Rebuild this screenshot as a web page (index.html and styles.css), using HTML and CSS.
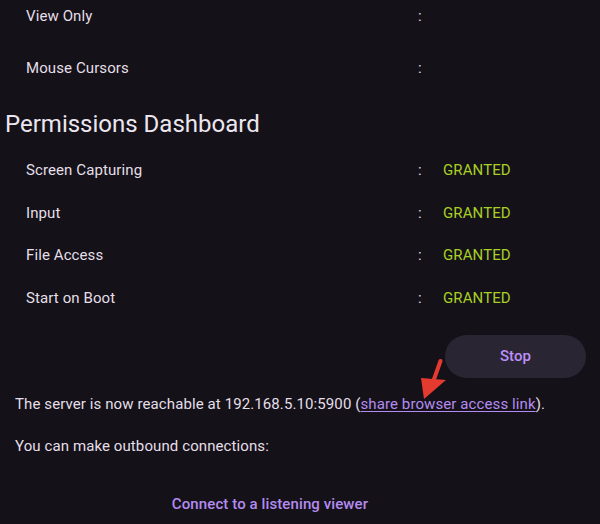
FILE: index.html
```html
<!DOCTYPE html>
<html>
<head>
<meta charset="utf-8">
<link rel="stylesheet" href="styles.css">
</head>
<body>
<div class="page">
  <div class="rows rows-top">
    <div class="row"><span class="label">View Only</span><span class="colon">:</span><span class="value"></span></div>
    <div class="row"><span class="label">Mouse Cursors</span><span class="colon">:</span><span class="value"></span></div>
  </div>
  <h2 class="heading">Permissions Dashboard</h2>
  <div class="rows rows-perm">
    <div class="row"><span class="label">Screen Capturing</span><span class="colon">:</span><span class="value granted">GRANTED</span></div>
    <div class="row"><span class="label">Input</span><span class="colon">:</span><span class="value granted">GRANTED</span></div>
    <div class="row"><span class="label">File Access</span><span class="colon">:</span><span class="value granted">GRANTED</span></div>
    <div class="row"><span class="label">Start on Boot</span><span class="colon">:</span><span class="value granted">GRANTED</span></div>
  </div>
  <div class="actions">
    <button class="stop">Stop</button>
  </div>
  <div class="info">
    <p class="line">The server is now reachable at 192.168.5.10:5900 (<a class="link" href="#">share browser access link</a>).</p>
    <svg class="arrow" width="40" height="50" viewBox="0 0 40 50">
      <line x1="30.5" y1="6" x2="23" y2="27" stroke="#e53a2f" stroke-width="4" stroke-linecap="round"/>
      <polygon points="11,23 36,25 14,44" fill="#e53a2f"/>
    </svg>
    <p class="line second">You can make outbound connections:</p>
  </div>
  <div class="connect-wrap">
    <a class="connect" href="#">Connect to a listening viewer</a>
  </div>
</div>
</body>
</html>
```
FILE: styles.css
```css
html, body {
  margin: 0;
  padding: 0;
  background: #141218;
}
.page {
  width: 600px;
  height: 524px;
  overflow: hidden;
  font-family: Roboto, "Noto Sans", sans-serif;
  color: #e4dfe8;
  letter-spacing: 0.1px;
  position: relative;
}
.rows {
  display: flex;
  flex-direction: column;
}
.row {
  display: grid;
  grid-template-columns: 392px 25px 1fr;
  padding-left: 26px;
  font-size: 15px;
  line-height: 20px;
}
.rows-top {
  padding-top: 6px;
  gap: 32px;
}
.rows-perm {
  gap: 22.5px;
  margin-top: 21px;
}
.heading {
  margin: 31px 0 0 5px;
  font-size: 24px;
  font-weight: 400;
  line-height: 30px;
  letter-spacing: 0;
  color: #ece6f0;
}
.colon {
  color: #e4dfe8;
}
.granted {
  color: #a9cf25;
}
.actions {
  display: flex;
  justify-content: flex-end;
  padding-right: 14px;
  margin-top: 27px;
}
.stop {
  width: 141px;
  height: 43px;
  border: none;
  border-radius: 22px;
  background: #2a2532;
  color: #bb90f5;
  font-family: Roboto, sans-serif;
  font-size: 15px;
  font-weight: 500;
  letter-spacing: 0.1px;
}
.info {
  position: relative;
  padding-left: 15px;
  margin-top: 16px;
}
.line {
  margin: 0;
  font-size: 15px;
  line-height: 20px;
}
.second {
  margin-top: 22px;
}
.link {
  color: #b48bf0;
  text-decoration: underline;
  text-underline-offset: 2px;
}
.arrow {
  position: absolute;
  left: 410px;
  top: -39px;
}
.connect-wrap {
  display: flex;
  justify-content: center;
  width: 540px;
  margin-top: 39px;
}
.connect {
  color: #b48bf0;
  font-size: 15px;
  font-weight: 500;
  text-decoration: none;
}
```
